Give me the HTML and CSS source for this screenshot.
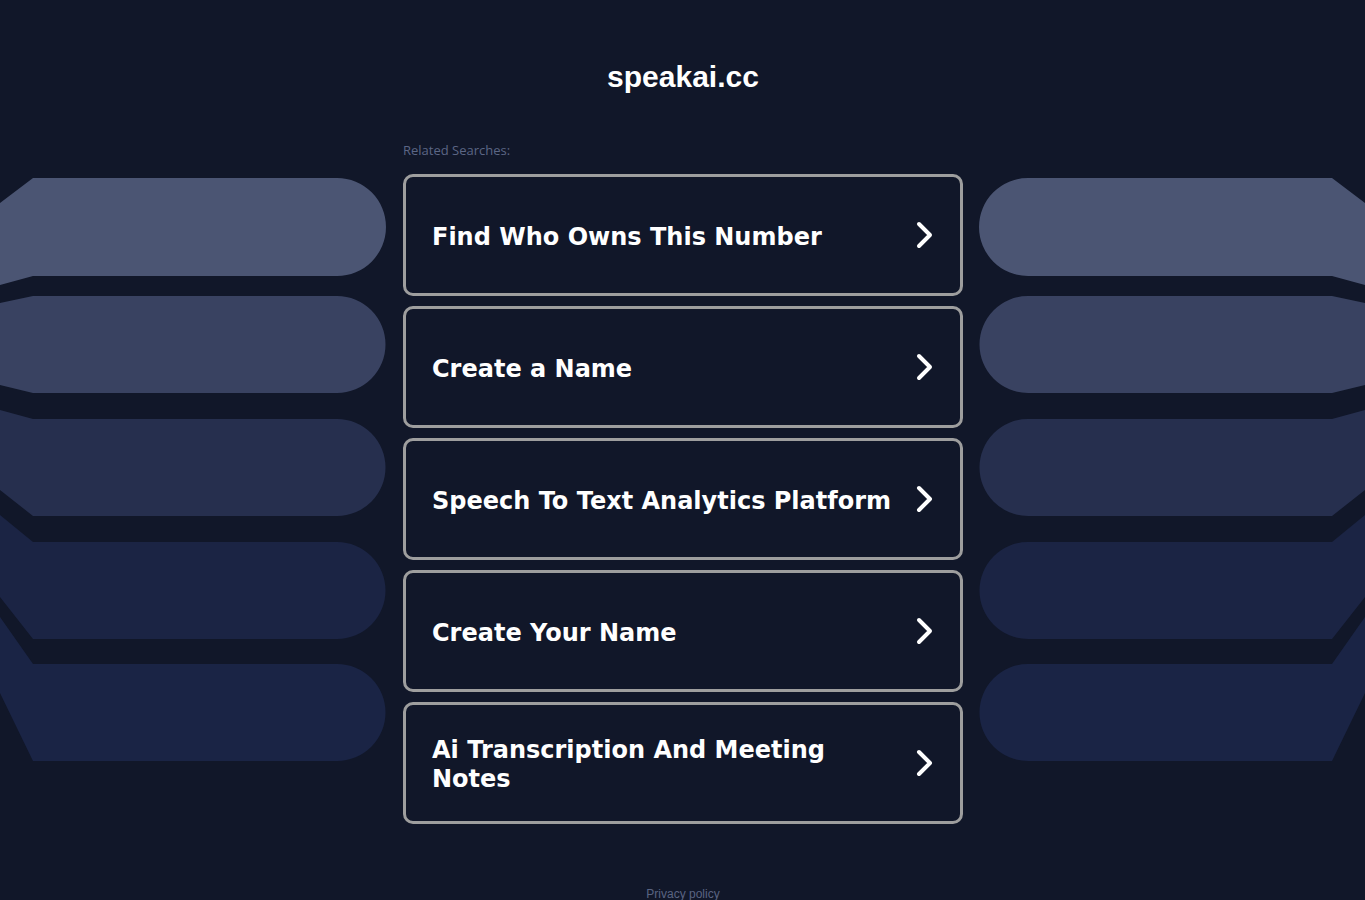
FILE: index.html
```html
<!DOCTYPE html>
<html lang="en">
<head>
    <meta charset="UTF-8">
    <meta name="viewport" content="width=device-width, initial-scale=1.0">
    <title>speakai.cc</title>
    <link rel="stylesheet" href="styles.css">
</head>
<body>
    <div class="page">
        <aside class="side side-left">
            <svg class="bars" width="403" height="600" viewBox="0 0 403 600">
                <path fill="#4b5573" d="M0,33 L33,8 H337 A49,49 0 0 1 337,106 H33 L0,115 Z"/>
                <path fill="#394261" d="M0,133 L33,126 H337 A48.5,48.5 0 0 1 337,223 H33 L0,215 Z"/>
                <path fill="#262f4e" d="M0,240 L33,249 H337 A48.5,48.5 0 0 1 337,346 H33 L0,320 Z"/>
                <path fill="#1b2444" d="M0,345 L33,372 H337 A48.5,48.5 0 0 1 337,469 H33 L0,427 Z"/>
                <path fill="#1a2445" d="M0,447 L33,494 H337 A48.5,48.5 0 0 1 337,591 H33 L0,523 Z"/>
            </svg>
        </aside>

        <main class="center">
            <h1 class="domain">speakai.cc</h1>
            <p class="label">Related Searches:</p>
            <div class="links">
                <a class="link" href="#"><span class="link-text">Find Who Owns This Number</span>
                    <svg class="chev" width="20" height="30" viewBox="0 0 20 30"><path d="M6 4 L17 15 L6 26"/></svg></a>
                <a class="link" href="#"><span class="link-text">Create a Name</span>
                    <svg class="chev" width="20" height="30" viewBox="0 0 20 30"><path d="M6 4 L17 15 L6 26"/></svg></a>
                <a class="link" href="#"><span class="link-text">Speech To Text Analytics Platform</span>
                    <svg class="chev" width="20" height="30" viewBox="0 0 20 30"><path d="M6 4 L17 15 L6 26"/></svg></a>
                <a class="link" href="#"><span class="link-text">Create Your Name</span>
                    <svg class="chev" width="20" height="30" viewBox="0 0 20 30"><path d="M6 4 L17 15 L6 26"/></svg></a>
                <a class="link" href="#"><span class="link-text">Ai Transcription And Meeting Notes</span>
                    <svg class="chev" width="20" height="30" viewBox="0 0 20 30"><path d="M6 4 L17 15 L6 26"/></svg></a>
            </div>
            <footer class="foot"><a href="#">Privacy policy</a></footer>
        </main>

        <aside class="side side-right">
            <svg class="bars" width="402" height="600" viewBox="0 0 402 600">
                <g transform="translate(402,0) scale(-1,1)">
                    <path fill="#4b5573" d="M0,33 L33,8 H337 A49,49 0 0 1 337,106 H33 L0,115 Z"/>
                    <path fill="#394261" d="M0,133 L33,126 H337 A48.5,48.5 0 0 1 337,223 H33 L0,215 Z"/>
                    <path fill="#262f4e" d="M0,240 L33,249 H337 A48.5,48.5 0 0 1 337,346 H33 L0,320 Z"/>
                    <path fill="#1b2444" d="M0,345 L33,372 H337 A48.5,48.5 0 0 1 337,469 H33 L0,427 Z"/>
                    <path fill="#1a2445" d="M0,447 L33,494 H337 A48.5,48.5 0 0 1 337,591 H33 L0,523 Z"/>
                </g>
            </svg>
        </aside>
    </div>
</body>
</html>
```

FILE: styles.css
```css
body {
    margin: 0;
    padding: 0;
    background: #111729;
    color: #fff;
    font-family: 'Liberation Sans', Arial, sans-serif;
    overflow: hidden;
}

.page {
    display: grid;
    grid-template-columns: 403px 560px 1fr;
    min-height: 900px;
}

.side {
    padding-top: 170px;
}

.bars {
    display: block;
}

.center {
    display: flex;
    flex-direction: column;
}

.domain {
    margin: 59px 0 0;
    font-size: 30px;
    line-height: 36px;
    font-weight: bold;
    text-align: center;
    color: #fff;
}

.label {
    margin: 47px 0 15px;
    font-family: 'Open Sans', sans-serif;
    font-size: 13px;
    line-height: 17px;
    color: #5c6685;
}

.links {
    display: flex;
    flex-direction: column;
    gap: 10px;
}

.link {
    display: flex;
    align-items: center;
    gap: 16px;
    box-sizing: border-box;
    height: 122px;
    padding: 0 27px 0 26px;
    border: 3px solid #9e9e9e;
    border-radius: 10px;
    background: #111729;
    color: #fff;
    text-decoration: none;
}

.link-text {
    flex: 1;
    padding-top: 4px;
    font-family: 'DejaVu Sans', Verdana, sans-serif;
    font-weight: bold;
    font-size: 24px;
    line-height: 29px;
}

.chev {
    flex: none;
}

.chev path {
    fill: none;
    stroke: #fff;
    stroke-width: 4;
    stroke-linecap: round;
    stroke-linejoin: round;
}

.foot {
    margin-top: 62px;
    text-align: center;
    font-size: 12px;
    line-height: 16px;
}

.foot a {
    color: #5a6482;
    text-decoration: none;
}
```
